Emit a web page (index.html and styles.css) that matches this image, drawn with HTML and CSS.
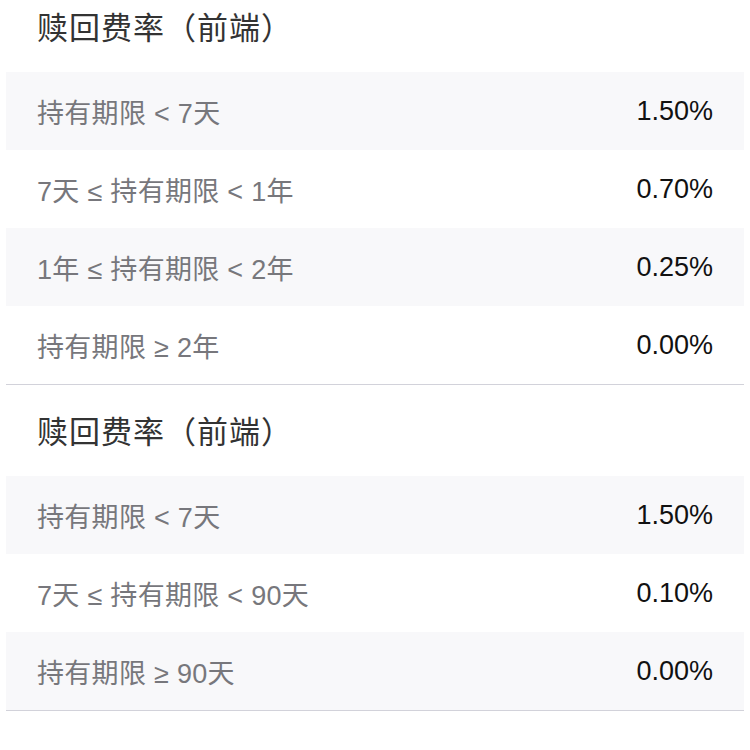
FILE: index.html
```html
<!DOCTYPE html>
<html lang="zh-CN">
<head>
<meta charset="utf-8">
<link rel="stylesheet" href="styles.css">
</head>
<body>
<div class="page">
  <section class="fee-section">
    <h2 class="fee-title">赎回费率（前端）</h2>
    <div class="fee-row alt"><span class="fee-label">持有期限 &lt; 7天</span><span class="fee-value">1.50%</span></div>
    <div class="fee-row"><span class="fee-label">7天 ≤ 持有期限 &lt; 1年</span><span class="fee-value">0.70%</span></div>
    <div class="fee-row alt"><span class="fee-label">1年 ≤ 持有期限 &lt; 2年</span><span class="fee-value">0.25%</span></div>
    <div class="fee-row"><span class="fee-label">持有期限 ≥ 2年</span><span class="fee-value">0.00%</span></div>
  </section>
  <section class="fee-section">
    <h2 class="fee-title">赎回费率（前端）</h2>
    <div class="fee-row alt"><span class="fee-label">持有期限 &lt; 7天</span><span class="fee-value">1.50%</span></div>
    <div class="fee-row"><span class="fee-label">7天 ≤ 持有期限 &lt; 90天</span><span class="fee-value">0.10%</span></div>
    <div class="fee-row alt"><span class="fee-label">持有期限 ≥ 90天</span><span class="fee-value">0.00%</span></div>
  </section>
</div>
</body>
</html>
```
FILE: styles.css
```css
html, body {
  margin: 0;
  padding: 0;
  background: #ffffff;
}
body {
  font-family: "Liberation Sans", "Noto Sans CJK SC", sans-serif;
}
.page {
  margin-top: -19px;
  padding: 0 6px;
}
.fee-section {
  display: flex;
  flex-direction: column;
  border-bottom: 1px solid #d2d2da;
}
.fee-title {
  margin: 0;
  height: 91px;
  display: flex;
  align-items: center;
  padding: 0 0 2px 31px;
  box-sizing: border-box;
  font-size: 31px;
  font-weight: normal;
  color: #333333;
  letter-spacing: 1px;
}
.fee-row {
  height: 78px;
  display: flex;
  align-items: center;
  justify-content: space-between;
  padding: 1px 31px 0;
  box-sizing: border-box;
  background: #ffffff;
}
.fee-row.alt {
  background: #f8f8fa;
}
.fee-label {
  font-size: 27px;
  letter-spacing: 0.3px;
  color: #77777c;
}
.fee-value {
  font-size: 27px;
  color: #111111;
}
```
